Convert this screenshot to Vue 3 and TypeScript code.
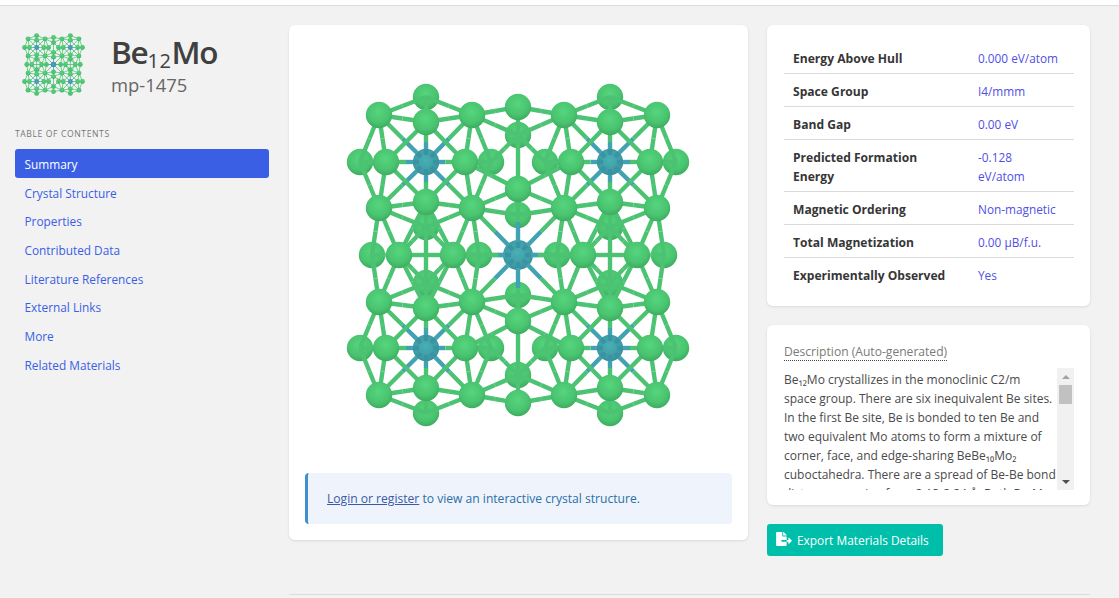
<script setup lang="ts">
interface P { x: number; y: number }
interface Atom extends P { r: number; mo: boolean; back: boolean }
interface Seg { x1: number; y1: number; x2: number; y2: number; c: string; k: string }

const CX = 518
const CY = 255

const base: Record<string, [number, number]> = {
  A: [426, 97], B: [379, 115], C: [426, 122], D: [472, 115],
  E: [360, 162], F: [386, 162], M: [426, 162], G: [465, 162], H: [491, 162],
  I: [379, 208], J: [426, 202], K: [472, 208], L: [426, 227],
  T1: [518, 107], T2: [518, 135], T3: [518, 189], T4: [518, 215],
  N1: [372, 255], N2: [399, 255], N3: [453, 255], N4: [479, 255],
  Z: [518, 255]
}
const backNames = new Set(['A', 'E', 'H', 'L', 'M', 'T2', 'T4', 'N1', 'N4', 'Z'])
const moNames = new Set(['M', 'Z'])

const pairs: [string, string][] = [
  ['A','B'],['A','D'],['A','C'],['B','C'],['C','D'],['B','M'],['D','M'],['C','M'],
  ['F','M'],['M','G'],['I','M'],['K','M'],['J','M'],['B','E'],['B','F'],['D','G'],
  ['D','H'],['E','I'],['F','I'],['E','F'],['G','H'],['F','C'],['C','G'],['F','J'],
  ['J','G'],['I','J'],['J','K'],['I','L'],['K','L'],['J','L'],['G','K'],['H','K'],
  ['D','T1'],['D','T2'],['H','T2'],['G','T3'],['K','T3'],['K','T4'],['T1','T2'],
  ['T2','T3'],['T3','T4'],['T3','Z'],['I','N1'],['I','N2'],['K','N3'],['K','N4'],
  ['L','N2'],['L','N3'],['J','N3'],['J','N2'],['N1','N2'],['N2','N3'],['N3','N4'],
  ['N3','Z'],['N4','Z'],['K','Z']
]

function mirrors(p: P): P[] {
  return [
    { x: p.x, y: p.y },
    { x: 2 * CX - p.x, y: p.y },
    { x: p.x, y: 2 * CY - p.y },
    { x: 2 * CX - p.x, y: 2 * CY - p.y }
  ]
}

const atomMap = new Map<string, Atom>()
for (const name of Object.keys(base)) {
  const [x, y] = base[name]
  mirrors({ x, y }).forEach((m) => {
    atomMap.set(`${m.x},${m.y}`, {
      ...m,
      r: name === 'Z' ? 15 : 13.2,
      mo: moNames.has(name),
      back: backNames.has(name)
    })
  })
}
const atoms = [...atomMap.values()]
const backAtoms = atoms.filter((a) => a.back)
const frontAtoms = atoms.filter((a) => !a.back)

const GREEN = '#4cc273'
const TEAL = '#42a2b2'
const TEAL_DARK = '#3a93a4'
const segMap = new Map<string, Seg>()

function addSeg(a: P, b: P, c: string) {
  const k = [a.x, a.y, b.x, b.y].join('_')
  const k2 = [b.x, b.y, a.x, a.y].join('_')
  if (!segMap.has(k) && !segMap.has(k2)) segMap.set(k, { x1: a.x, y1: a.y, x2: b.x, y2: b.y, c, k })
}

function along(from: P, to: P, dist: number): P {
  const d = Math.hypot(to.x - from.x, to.y - from.y)
  return { x: from.x + ((to.x - from.x) * dist) / d, y: from.y + ((to.y - from.y) * dist) / d }
}

function addHalf(start: P, mid: P, isMo: boolean) {
  if (isMo) {
    addSeg(along(start, mid, 13), mid, TEAL)
    addSeg(along(start, mid, 7), along(start, mid, 13), TEAL_DARK)
  } else {
    addSeg(start, mid, GREEN)
  }
}

function addBond(n1: string, n2: string) {
  const a = { x: base[n1][0], y: base[n1][1] }
  const b = { x: base[n2][0], y: base[n2][1] }
  const ma = mirrors(a)
  const mb = mirrors(b)
  ma.forEach((p, i) => {
    const q = mb[i]
    const mid = { x: (p.x + q.x) / 2, y: (p.y + q.y) / 2 }
    addHalf(p, mid, moNames.has(n1))
    addHalf(q, mid, moNames.has(n2))
  })
}
pairs.forEach(([a, b]) => addBond(a, b))
mirrors({ x: 426, y: 227 }).slice(0, 2).forEach((p) => {
  addSeg(p, { x: p.x, y: 2 * CY - p.y }, GREEN)
})
const segs = [...segMap.values()]

const toc = [
  'Summary', 'Crystal Structure', 'Properties', 'Contributed Data',
  'Literature References', 'External Links', 'More', 'Related Materials'
]

const rows = [
  { label: 'Energy Above Hull', value: '0.000 eV/atom' },
  { label: 'Space Group', value: 'I4/mmm' },
  { label: 'Band Gap', value: '0.00 eV' },
  { label: 'Predicted Formation Energy', value: '-0.128 eV/atom' },
  { label: 'Magnetic Ordering', value: 'Non-magnetic' },
  { label: 'Total Magnetization', value: '0.00 µB/f.u.' },
  { label: 'Experimentally Observed', value: 'Yes' }
]
</script>

<template>
  <div class="page">
    <aside class="side">
      <header class="head">
        <svg class="thumb" viewBox="346 83 344 344" aria-hidden="true">
          <use href="#crystal" />
        </svg>
        <div class="titles">
          <h1 class="formula">Be<sub>12</sub>Mo</h1>
          <p class="mpid">mp-1475</p>
        </div>
      </header>
      <p class="toc-title">Table of Contents</p>
      <nav class="toc">
        <a v-for="(item, i) in toc" :key="item" class="toc-link" :class="{ active: i === 0 }">{{ item }}</a>
      </nav>
    </aside>

    <main class="main">
      <div class="cols">
        <section class="card viewer">
          <svg class="crystal" viewBox="289 25 459 448" aria-label="Crystal structure of Be12Mo">
            <defs>
              <radialGradient id="gBe" cx="0.48" cy="0.38" r="0.65">
                <stop offset="0" stop-color="#56d57e" />
                <stop offset="0.65" stop-color="#49c36f" />
                <stop offset="1" stop-color="#3ba85e" />
              </radialGradient>
              <radialGradient id="gMo" cx="0.48" cy="0.42" r="0.65">
                <stop offset="0" stop-color="#48b0b5" />
                <stop offset="0.7" stop-color="#3e9ba3" />
                <stop offset="1" stop-color="#35868d" />
              </radialGradient>
              <g id="crystal">
                <circle
                  v-for="a in backAtoms"
                  :key="`b${a.x}-${a.y}`"
                  :cx="a.x" :cy="a.y" :r="a.r"
                  :fill="a.mo ? 'url(#gMo)' : 'url(#gBe)'"
                />
                <line
                  v-for="s in segs"
                  :key="s.k"
                  :x1="s.x1" :y1="s.y1" :x2="s.x2" :y2="s.y2"
                  :stroke="s.c" stroke-width="4.4"
                />
                <circle
                  v-for="a in frontAtoms"
                  :key="`f${a.x}-${a.y}`"
                  :cx="a.x" :cy="a.y" :r="a.r"
                  fill="url(#gBe)"
                />
              </g>
            </defs>
            <use href="#crystal" />
          </svg>
          <div class="notice">
            <a class="notice-link">Login or register</a> to view an interactive crystal structure.
          </div>
        </section>

        <div class="right">
          <section class="card facts">
            <div v-for="r in rows" :key="r.label" class="row">
              <div class="label">{{ r.label }}</div>
              <div class="value">{{ r.value }}</div>
            </div>
          </section>

          <section class="card desc">
            <span class="desc-title">Description (Auto-generated)</span>
            <div class="desc-body">
              <div class="desc-text">Be₁₂Mo crystallizes in the monoclinic C2/m<br />space group. There are six inequivalent Be sites. In the first Be site, Be is bonded to ten Be and two equivalent Mo atoms to form a mixture of corner, face, and edge-sharing BeBe₁₀Mo₂ cuboctahedra. There are a spread of Be-Be bond distances ranging from 2.13-2.24 Å. Both Be-Mo bond lengths are 2.67 Å. In the second Be site, Be is bonded to ten Be and two equivalent Mo atoms to form a mixture of corner, face, and edge-sharing cuboctahedra.</div>
              <div class="sbar" aria-hidden="true">
                <span class="arrow up"></span>
                <span class="thumb-bar"></span>
                <span class="arrow down"></span>
              </div>
            </div>
          </section>

          <button class="export" type="button">
            <svg class="export-icon" viewBox="0 0 576 512" aria-hidden="true">
              <path fill="currentColor" d="M384 121.900c0-6.300-2.500-12.400-7-16.900L279.100 7c-4.500-4.500-10.600-7-17-7H256v128h128zM571 308l-95.700-96.400c-10.100-10.100-27.400-3-27.400 11.300V288h-64v64h64v65.200c0 14.300 17.300 21.400 27.400 11.300L571 332c6.600-6.600 6.600-17.400 0-24zm-379 28v-32c0-8.800 7.200-16 16-16h176V160H248c-13.200 0-24-10.800-24-24V0H24C10.700 0 0 10.700 0 24v464c0 13.300 10.700 24 24 24h336c13.300 0 24-10.700 24-24V352H208c-8.800 0-16-7.200-16-16z" />
            </svg>
            <span>Export Materials Details</span>
          </button>
        </div>
      </div>
      <div class="rule"></div>
    </main>
  </div>
</template>

<style>
html, body { margin: 0; background: #f2f2f2; }
</style>

<style scoped>
.page {
  box-sizing: border-box;
  height: 598px;
  overflow: hidden;
  display: flex;
  border-top: 5px solid #fff;
  box-shadow: inset 0 1px 0 #dcdcdc;
  background: #f2f2f2;
  font-family: "Open Sans", "Noto Sans", sans-serif;
  font-size: 12.1px;
  color: #4a4a4a;
}
.side { box-sizing: border-box; width: 289px; padding: 20px 20px 0 15px; flex: none; }
.head { display: flex; align-items: center; gap: 26px; padding-left: 7px; height: 80px; }
.thumb { width: 63px; height: 63px; flex: none; margin-top: -2px; }
.formula {
  margin: 0;
  font-size: 31.5px;
  line-height: 36px;
  font-weight: 600;
  letter-spacing: -1.2px;
  color: #404040;
}
.formula sub { font-size: 20px; font-weight: 500; line-height: 0; vertical-align: -4px; letter-spacing: 0.5px; }
.mpid { margin: 3px 0 0; font-size: 18.4px; line-height: 24px; color: #666; }
.toc-title {
  margin: 23px 0 9px;
  font-size: 8.6px;
  line-height: 12px;
  letter-spacing: 0.6px;
  text-transform: uppercase;
  color: #777;
}
.toc { display: flex; flex-direction: column; font-size: 11.85px; }
.toc-link {
  height: 28.7px;
  line-height: 30px;
  padding-left: 9.5px;
  border-radius: 3px;
  color: #3a5fe5;
}
.toc-link.active { background: #3a5fe5; color: #fff; font-weight: 500; }
.main { flex: 1; padding: 20px 29px 0 0; min-width: 0; }
.cols { display: grid; grid-template-columns: 459px 323px; column-gap: 19px; align-items: start; height: 569px; }
.card {
  background: #fff;
  border-radius: 6px;
  box-shadow: 0 1px 3px rgba(10, 10, 10, 0.1);
}
.viewer { height: 515px; }
.crystal { display: block; width: 459px; height: 448px; }
.notice {
  box-sizing: border-box;
  margin: 0 16px;
  height: 51px;
  padding-left: 19px;
  line-height: 52px;
  background: #eff3fb;
  border-left: 3px solid #3e8ed0;
  border-radius: 4px;
  color: #296fa8;
}
.notice-link { text-decoration: underline; color: #3a5aa8; }
.right { display: flex; flex-direction: column; align-items: flex-start; }
.facts { box-sizing: border-box; width: 323px; height: 281px; padding: 16px 16px 0 17px; }
.row {
  display: grid;
  grid-template-columns: 185px 1fr;
  padding: 8px 9px 5px;
  line-height: 19px;
  border-bottom: 1px solid #dbdbdb;
}
.row:last-child { border-bottom: 0; }
.label { font-weight: 700; color: #363636; padding-right: 30px; }
.value { color: #4f4fe6; max-width: 82px; font-size: 11.8px; }
.desc {
  box-sizing: border-box;
  width: 323px;
  height: 180px;
  margin-top: 19px;
  padding: 18px 16px 16px 17px;
}
.desc-title {
  display: inline-block;
  line-height: 16px;
  color: #7a7a7a;
  border-bottom: 1px dotted #4a4a4a;
}
.desc-body { display: flex; margin-top: 7px; height: 122px; }
.desc-text {
  flex: 1;
  min-width: 0;
  overflow: hidden;
  padding-top: 2px;
  font-size: 12px;
  line-height: 19px;
  color: #4a4a4a;
}
.sbar {
  flex: none;
  width: 17px;
  display: flex;
  flex-direction: column;
  align-items: center;
  background: #f1f1f1;
}
.arrow { width: 0; height: 0; border-left: 4px solid transparent; border-right: 4px solid transparent; }
.arrow.up { margin-top: 7px; border-bottom: 4px solid #a3a3a3; }
.arrow.down { margin-top: auto; margin-bottom: 6px; border-top: 4px solid #505050; }
.thumb-bar { width: 13px; height: 19px; margin-top: 6px; background: #c1c1c1; }
.export {
  display: flex;
  align-items: center;
  gap: 5px;
  margin-top: 19px;
  height: 32px;
  padding: 0 14px 0 9px;
  border: 0;
  border-radius: 3px;
  background: #00bfaa;
  color: #fff;
  font-family: inherit;
  font-size: 11.9px;
  font-weight: 500;
}
.export-icon { width: 16px; height: 14px; margin-top: -3px; }
.rule { height: 1px; background: #dcdcdc; width: 801px; }
</style>
